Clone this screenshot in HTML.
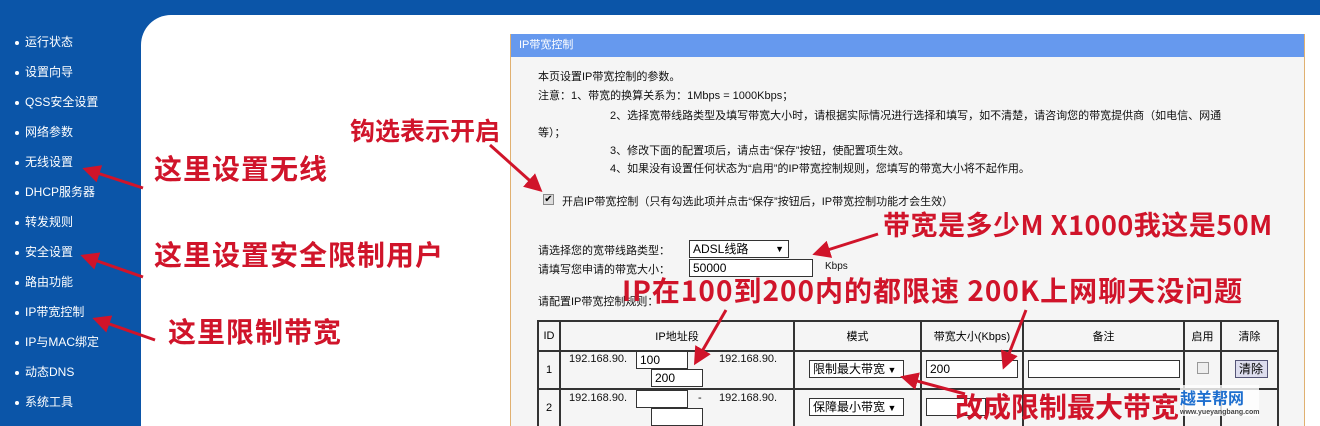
<!DOCTYPE html>
<html style="overflow:hidden;width:1320px;height:426px"><head><meta charset="utf-8"><style>
*{margin:0;padding:0;box-sizing:border-box}
body{width:1320px;height:426px;overflow:hidden;background:#0b55a8;position:relative;font-family:"Liberation Sans","Noto Sans CJK SC",sans-serif;font-size:12px;color:#000}
.main{position:absolute;left:141px;top:15px;width:1179px;height:411px;background:#fff;border-top-left-radius:30px}
.nav{position:absolute;left:15px;color:#fff;font-size:12px}
.nav b{display:inline-block;width:4px;height:4px;background:#fff;border-radius:2px;margin-right:6px;vertical-align:middle}
.panel{position:absolute;left:510px;top:34px;width:795px;height:392px;background:#f5f5f5;border-left:1px solid #e0b070;border-right:1px solid #e0b070}
.ph{height:23px;background:#6699ee;color:#fff;font-size:11px;line-height:23px;padding-left:8px}
.t{position:absolute;font-size:11px;white-space:nowrap;color:#111}
.r{position:absolute;color:#d0142a;font-weight:bold;white-space:nowrap;font-family:"Noto Sans CJK SC","Liberation Sans",sans-serif}
table{position:absolute;left:537px;top:320px;border-collapse:collapse;font-size:11px}
td{border:2px solid #333;text-align:center;background:#f5f5f5}
.in{position:absolute;background:#fff;border:1px solid #333;height:18px;font-size:12px;line-height:16px;padding-left:3px}
</style></head><body>
<div class="main"></div>
<div class="nav" style="top:33px"><b></b>运行状态</div>
<div class="nav" style="top:63px"><b></b>设置向导</div>
<div class="nav" style="top:93px"><b></b>QSS安全设置</div>
<div class="nav" style="top:123px"><b></b>网络参数</div>
<div class="nav" style="top:153px"><b></b>无线设置</div>
<div class="nav" style="top:183px"><b></b>DHCP服务器</div>
<div class="nav" style="top:213px"><b></b>转发规则</div>
<div class="nav" style="top:243px"><b></b>安全设置</div>
<div class="nav" style="top:273px"><b></b>路由功能</div>
<div class="nav" style="top:303px"><b></b>IP带宽控制</div>
<div class="nav" style="top:333px"><b></b>IP与MAC绑定</div>
<div class="nav" style="top:363px"><b></b>动态DNS</div>
<div class="nav" style="top:393px"><b></b>系统工具</div>

<div class="panel"><div class="ph">IP带宽控制</div></div>
<div class="t" style="left:538px;top:68px">本页设置IP带宽控制的参数。</div>
<div class="t" style="left:538px;top:87px">注意：1、带宽的换算关系为：1Mbps = 1000Kbps；</div>
<div class="t" style="left:610px;top:107px">2、选择宽带线路类型及填写带宽大小时，请根据实际情况进行选择和填写，如不清楚，请咨询您的带宽提供商（如电信、网通</div>
<div class="t" style="left:538px;top:124px">等）；</div>
<div class="t" style="left:610px;top:142px">3、修改下面的配置项后，请点击“保存”按钮，使配置项生效。</div>
<div class="t" style="left:610px;top:160px">4、如果没有设置任何状态为“启用”的IP带宽控制规则，您填写的带宽大小将不起作用。</div>
<div style="position:absolute;left:543px;top:194px;width:11px;height:11px;border:1px solid #888;background:#ddd;font-size:10px;line-height:9px;text-align:center">✔</div>
<div class="t" style="left:562px;top:193px">开启IP带宽控制（只有勾选此项并点击“保存”按钮后，IP带宽控制功能才会生效）</div>
<div class="t" style="left:538px;top:242px">请选择您的宽带线路类型：</div>
<div class="in" style="left:689px;top:240px;width:100px">ADSL线路 <span style="float:right;font-size:9px;margin-right:4px">▼</span></div>
<div class="t" style="left:538px;top:261px">请填写您申请的带宽大小：</div>
<div class="in" style="left:689px;top:259px;width:124px">50000</div>
<div class="t" style="left:825px;top:261px;font-size:10px">Kbps</div>
<div class="t" style="left:538px;top:293px">请配置IP带宽控制规则：</div>
<table>
<tr style="height:30px"><td style="width:22px">ID</td><td style="width:234px">IP地址段</td><td style="width:127px">模式</td><td style="width:102px">带宽大小(Kbps)</td><td style="width:161px">备注</td><td style="width:37px">启用</td><td style="width:57px">清除</td></tr>
<tr style="height:38px"><td>1</td><td></td><td></td><td></td><td></td><td></td><td></td></tr>
<tr style="height:38px"><td>2</td><td></td><td></td><td></td><td></td><td></td><td></td></tr>
</table>
<div class="t" style="left:569px;top:353px">192.168.90.</div>
<div class="in" style="left:636px;top:351px;width:52px">100</div>
<div class="in" style="left:651px;top:369px;width:52px">200</div>
<div class="t" style="left:719px;top:353px">192.168.90.</div>
<div class="in" style="left:809px;top:360px;width:95px">限制最大带宽<span style="font-size:9px"> ▼</span></div>
<div class="in" style="left:926px;top:360px;width:92px">200</div>
<div class="in" style="left:1028px;top:360px;width:152px"></div>
<div style="position:absolute;left:1197px;top:362px;width:12px;height:12px;border:1px solid #999;background:#eee"></div>
<div class="in" style="left:1235px;top:360px;width:33px;background:#dde;border-color:#557">清除</div>
<div class="t" style="left:569px;top:392px">192.168.90.</div>
<div class="in" style="left:636px;top:390px;width:52px"></div>
<div class="t" style="left:698px;top:392px">-</div>
<div class="in" style="left:651px;top:408px;width:52px"></div>
<div class="t" style="left:719px;top:392px">192.168.90.</div>
<div class="in" style="left:809px;top:398px;width:95px">保障最小带宽<span style="font-size:9px"> ▼</span></div>
<div class="in" style="left:926px;top:398px;width:60px"></div>

<div class="r" style="left:350px;top:112px;font-size:25px">钩选表示开启</div>
<div class="r" style="left:154px;top:148px;font-size:28px;letter-spacing:1px">这里设置无线</div>
<div class="r" style="left:154px;top:234px;font-size:28px;letter-spacing:1px">这里设置安全限制用户</div>
<div class="r" style="left:168px;top:311px;font-size:28px;letter-spacing:1px">这里限制带宽</div>
<div class="r" style="left:883px;top:204px;font-size:27px;letter-spacing:0.5px">带宽是多少M X1000我这是50M</div>
<div class="r" style="left:622px;top:270px;font-size:28px;letter-spacing:1px">IP在100到200内的都限速 200K上网聊天没问题</div>
<div class="r" style="left:955px;top:386px;font-size:28px">改成限制最大带宽</div>
<div style="position:absolute;left:1180px;top:385px;color:#1e6fcf;font-weight:bold;font-size:16px;background:rgba(255,255,255,.8)">越羊帮网<div style="font-size:7px;color:#444">www.yueyangbang.com</div></div>
<svg width="1320" height="426" style="position:absolute;left:0;top:0" fill="#d0142a" stroke="#d0142a" stroke-width="3">
<defs><marker id="a" markerWidth="6" markerHeight="6" refX="4" refY="3" orient="auto"><path d="M0,0L6,3L0,6z" stroke="none"/></marker></defs>
<line x1="143" y1="188" x2="88" y2="170" marker-end="url(#a)"/>
<line x1="143" y1="277" x2="86" y2="257" marker-end="url(#a)"/>
<line x1="155" y1="340" x2="98" y2="320" marker-end="url(#a)"/>
<line x1="490" y1="145" x2="538" y2="188" marker-end="url(#a)"/>
<line x1="878" y1="234" x2="818" y2="253" marker-end="url(#a)"/>
<line x1="726" y1="310" x2="697" y2="360" marker-end="url(#a)"/>
<line x1="1026" y1="310" x2="1005" y2="364" marker-end="url(#a)"/>
<line x1="965" y1="394" x2="906" y2="378" marker-end="url(#a)"/>
</svg>
</body></html>
